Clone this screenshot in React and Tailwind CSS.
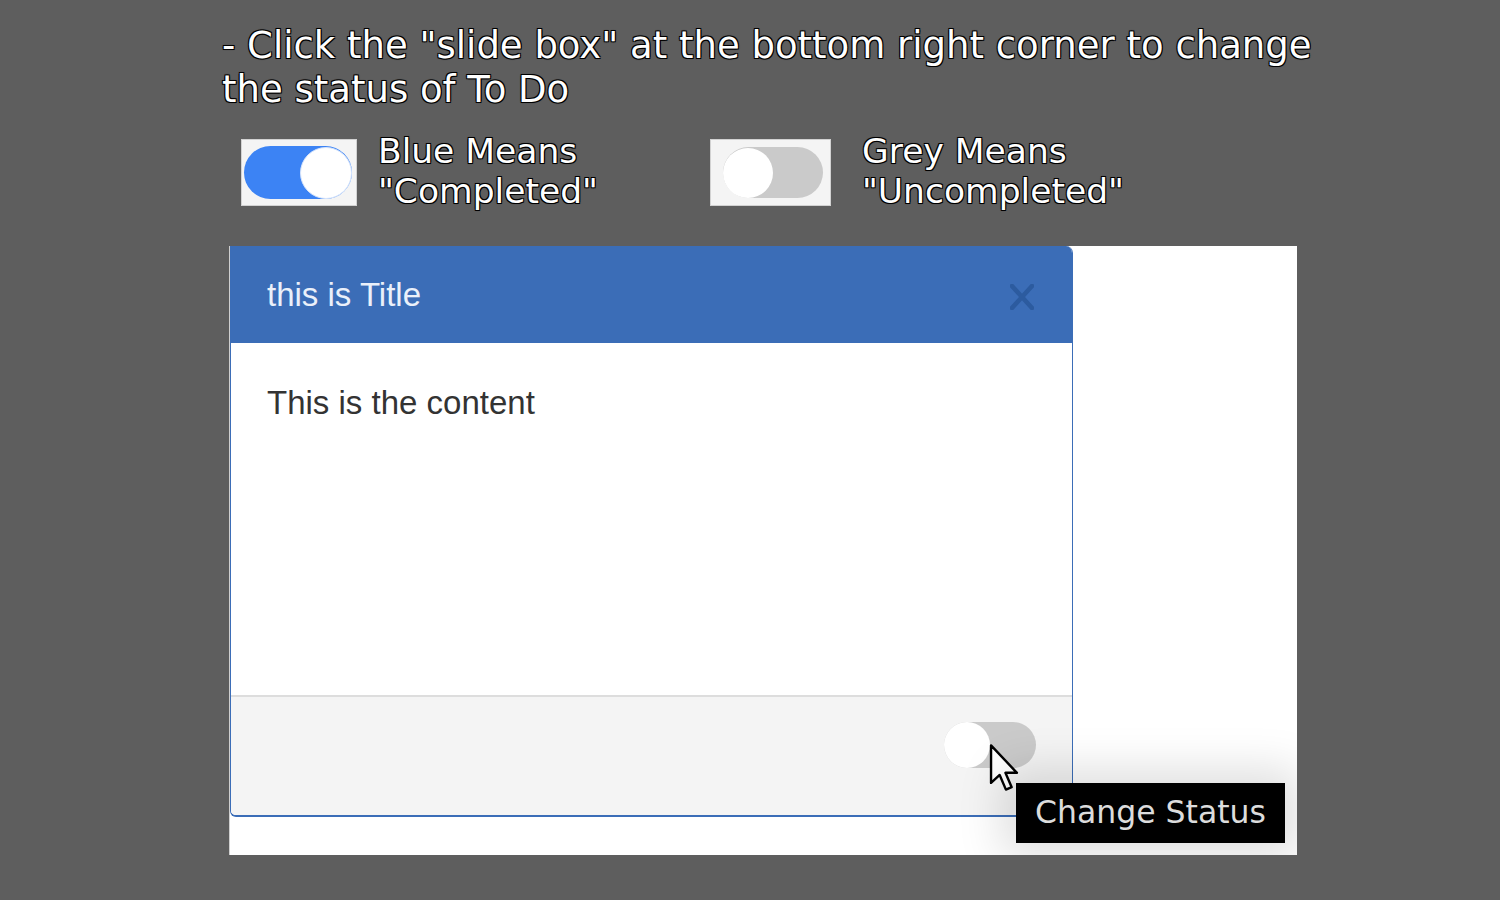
import React from "react";

const outline =
  "[text-shadow:-1px_-1px_0_#000,1px_-1px_0_#000,-1px_1px_0_#000,1px_1px_0_#000,0_0_2px_#000]";

function LegendItem({ on, label, value }) {
  return (
    <div className="flex items-start">
      <div
        className={`mt-[8px] flex h-[67px] items-center border border-[#d2d2d2] bg-[#f4f4f4] ${
          on ? "w-[116px] pl-[2px]" : "w-[121px] pl-[12px]"
        }`}
      >
        {on ? (
          <div className="flex h-[53px] w-[108px] items-center justify-end rounded-full bg-[#3c83f4]">
            <div className="h-[52px] w-[52px] rounded-full border border-[#d7e5fc] bg-white" />
          </div>
        ) : (
          <div className="flex h-[51px] w-[100px] items-center rounded-full bg-[#cacaca]">
            <div className="h-[50px] w-[50px] rounded-full bg-white" />
          </div>
        )}
      </div>
      <div
        className={`text-[34.5px] leading-[40px] text-white ${outline} ${
          on ? "ml-[21px]" : "ml-[31px]"
        }`}
        style={{ fontFamily: '"DejaVu Sans", sans-serif' }}
      >
        <div>{label}</div>
        <div>{value}</div>
      </div>
    </div>
  );
}

function Cursor() {
  return (
    <svg
      width="30"
      height="48"
      viewBox="0 0 12 20"
      className="absolute left-[759px] top-[498px]"
    >
      <path
        d="M0.6 0.6 L0.6 16.2 L4.2 12.9 L6.8 19 L9.2 18 L6.6 12 L11.4 12 Z"
        fill="#fff"
        stroke="#000"
        strokeWidth="1"
        strokeLinejoin="round"
      />
    </svg>
  );
}

export default function App() {
  return (
    <div
      className="min-h-[900px] w-full bg-[#5e5e5e] pt-[24px]"
      style={{ fontFamily: '"DejaVu Sans", sans-serif' }}
    >
      <div className={`pl-[222px] text-[37px] leading-[44px] text-white ${outline}`}>
        <div>- Click the "slide box" at the bottom right corner to change</div>
        <div>the status of To Do</div>
      </div>

      <div className="mt-[19px] flex pl-[241px]">
        <div className="w-[469px]">
          <LegendItem on label="Blue Means" value={'"Completed"'} />
        </div>
        <LegendItem label="Grey Means" value={'"Uncompleted"'} />
      </div>

      <div className="relative ml-[229px] mt-[35px] h-[609px] w-[1068px] overflow-hidden border-l border-[#cfcfcf] bg-white">
        <div
          className="flex h-[571px] w-[843px] flex-col overflow-hidden rounded-tr-[7px] rounded-bl-[6px] border-x border-b-2 border-[#3b6db7]"
          style={{ fontFamily: '"Liberation Sans", Arial, sans-serif' }}
        >
          <div className="flex h-[97px] shrink-0 items-center justify-between bg-[#3b6db7] pl-[36px] pr-[38px]">
            <span className="text-[33px] text-[#eaf0fa]">this is Title</span>
            <svg width="24" height="26" viewBox="0 0 24 26" className="mt-[4px]">
              <path
                d="M2 2 L22 24 M22 2 L2 24"
                stroke="#2c5b9f"
                strokeWidth="4.5"
                strokeLinecap="square"
              />
            </svg>
          </div>
          <div className="flex-1 border-b-2 border-[#dddddd] pl-[36px] pt-[35px]">
            <span className="text-[33px] text-[#333333]">This is the content</span>
          </div>
          <div className="flex h-[118px] shrink-0 justify-end bg-[#f4f4f4] pr-[36px] pt-[25px]">
            <div className="flex h-[46px] w-[92px] items-center rounded-full bg-[#cacaca]">
              <div className="h-[46px] w-[46px] rounded-full bg-white" />
            </div>
          </div>
        </div>

        <Cursor />

        <div
          className="absolute left-[786px] top-[537px] flex h-[60px] w-[269px] items-center justify-center bg-black text-[31.5px] text-[#dcdcdc] shadow-[0_0_45px_14px_rgba(0,0,0,0.13)]"
          style={{ fontFamily: '"DejaVu Sans", sans-serif' }}
        >
          Change Status
        </div>
      </div>
    </div>
  );
}
